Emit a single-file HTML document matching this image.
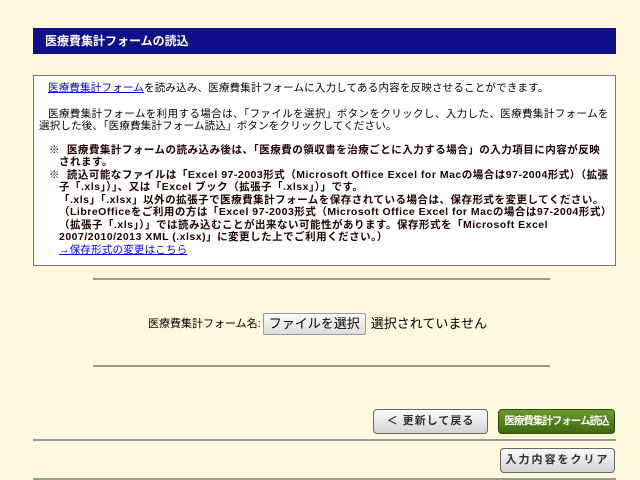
<!DOCTYPE html>
<html><head><meta charset="utf-8"><style>
body{margin:0;width:640px;height:480px;background:#fff8dc;font-family:"Liberation Sans","Noto Sans CJK JP",sans-serif;position:relative;overflow:hidden;color:#000}
.hd{position:absolute;left:33px;top:28px;width:583px;height:26px;background:#10108a;color:#fff;font-weight:bold;font-size:12px;line-height:27px;box-sizing:border-box;padding-left:12px}
.box{position:absolute;left:33px;top:75px;width:583px;height:191px;background:#fff;border:1px solid #777;box-sizing:border-box;font-size:10.5px;line-height:12.5px;padding:6px 0 0 5px;letter-spacing:0.2px;white-space:nowrap}
.box p{margin:0}
a{color:#00e;text-decoration:underline}
.b{font-weight:bold;color:#200;letter-spacing:0.5px}
.hr{position:absolute;height:2px;background:#999}
.btn{position:absolute;box-sizing:border-box;border-radius:4px;font-size:11px;text-align:center;font-weight:bold;letter-spacing:1px;white-space:nowrap}
</style></head><body>
<div class="hd">医療費集計フォームの読込</div>
<div class="box">
<p style="padding-left:9px"><a>医療費集計フォーム</a>を読み込み、医療費集計フォームに入力してある内容を反映させることができます。</p>
<p style="margin-top:13px;padding-left:9px;letter-spacing:0.4px">医療費集計フォームを利用する場合は、「ファイルを選択」ボタンをクリックし、入力した、医療費集計フォームを</p>
<p>選択した後、「医療費集計フォーム読込」ボタンをクリックしてください。</p>
<p class="b" style="margin-top:11px;padding-left:10px">※&nbsp; 医療費集計フォームの読み込み後は、「医療費の領収書を治療ごとに入力する場合」の入力項目に内容が反映</p>
<p class="b" style="padding-left:20px">されます。</p>
<p class="b" style="padding-left:10px">※&nbsp; 読込可能なファイルは「Excel 97-2003形式（Microsoft Office Excel for Macの場合は97-2004形式）（拡張</p>
<p class="b" style="padding-left:20px">子「.xls」）」、又は「Excel ブック（拡張子「.xlsx」）」です。</p>
<p class="b" style="padding-left:20px">「.xls」「.xlsx」以外の拡張子で医療費集計フォームを保存されている場合は、保存形式を変更してください。</p>
<p class="b" style="padding-left:20px">（LibreOfficeをご利用の方は「Excel 97-2003形式（Microsoft Office Excel for Macの場合は97-2004形式）</p>
<p class="b" style="padding-left:20px">（拡張子「.xls」）」では読み込むことが出来ない可能性があります。保存形式を「Microsoft Excel</p>
<p class="b" style="padding-left:20px">2007/2010/2013 XML (.xlsx)」に変更した上でご利用ください。）</p>
<p style="padding-left:20px"><a>→保存形式の変更はこちら</a></p>
</div>
<div class="hr" style="left:93px;top:278px;width:457px"></div>
<div style="position:absolute;left:148px;top:313px;font-size:11px;line-height:18px;white-space:nowrap">医療費集計フォーム名:<span style="display:inline-block;margin-left:2px;border:1px solid #999;border-radius:2px;background:linear-gradient(#fafafa,#ddd);font-size:13px;padding:0 5px;height:20px;line-height:20px;vertical-align:middle">ファイルを選択</span><span style="font-size:13px;margin-left:5px;vertical-align:middle">選択されていません</span></div>
<div class="hr" style="left:93px;top:365px;width:457px"></div>
<div class="btn" style="left:373px;top:409px;width:115px;height:25px;border:1px solid #666;background:linear-gradient(#fafafa,#d4d4d4);color:#333;line-height:23px">＜ 更新して戻る</div>
<div class="btn" style="left:498px;top:409px;width:117px;height:25px;border:1px solid #2a4a0a;background:linear-gradient(#6a9a2a,#3d6a10);color:#fff;line-height:23px;letter-spacing:-1px;font-size:10.5px">医療費集計フォーム読込</div>
<div class="hr" style="left:33px;top:439px;width:583px"></div>
<div class="btn" style="left:500px;top:448px;width:115px;height:25px;border:1px solid #666;background:linear-gradient(#fafafa,#d4d4d4);color:#333;line-height:23px;letter-spacing:2px">入力内容をクリア</div>
<div class="hr" style="left:33px;top:478px;width:583px"></div>
</body></html>
